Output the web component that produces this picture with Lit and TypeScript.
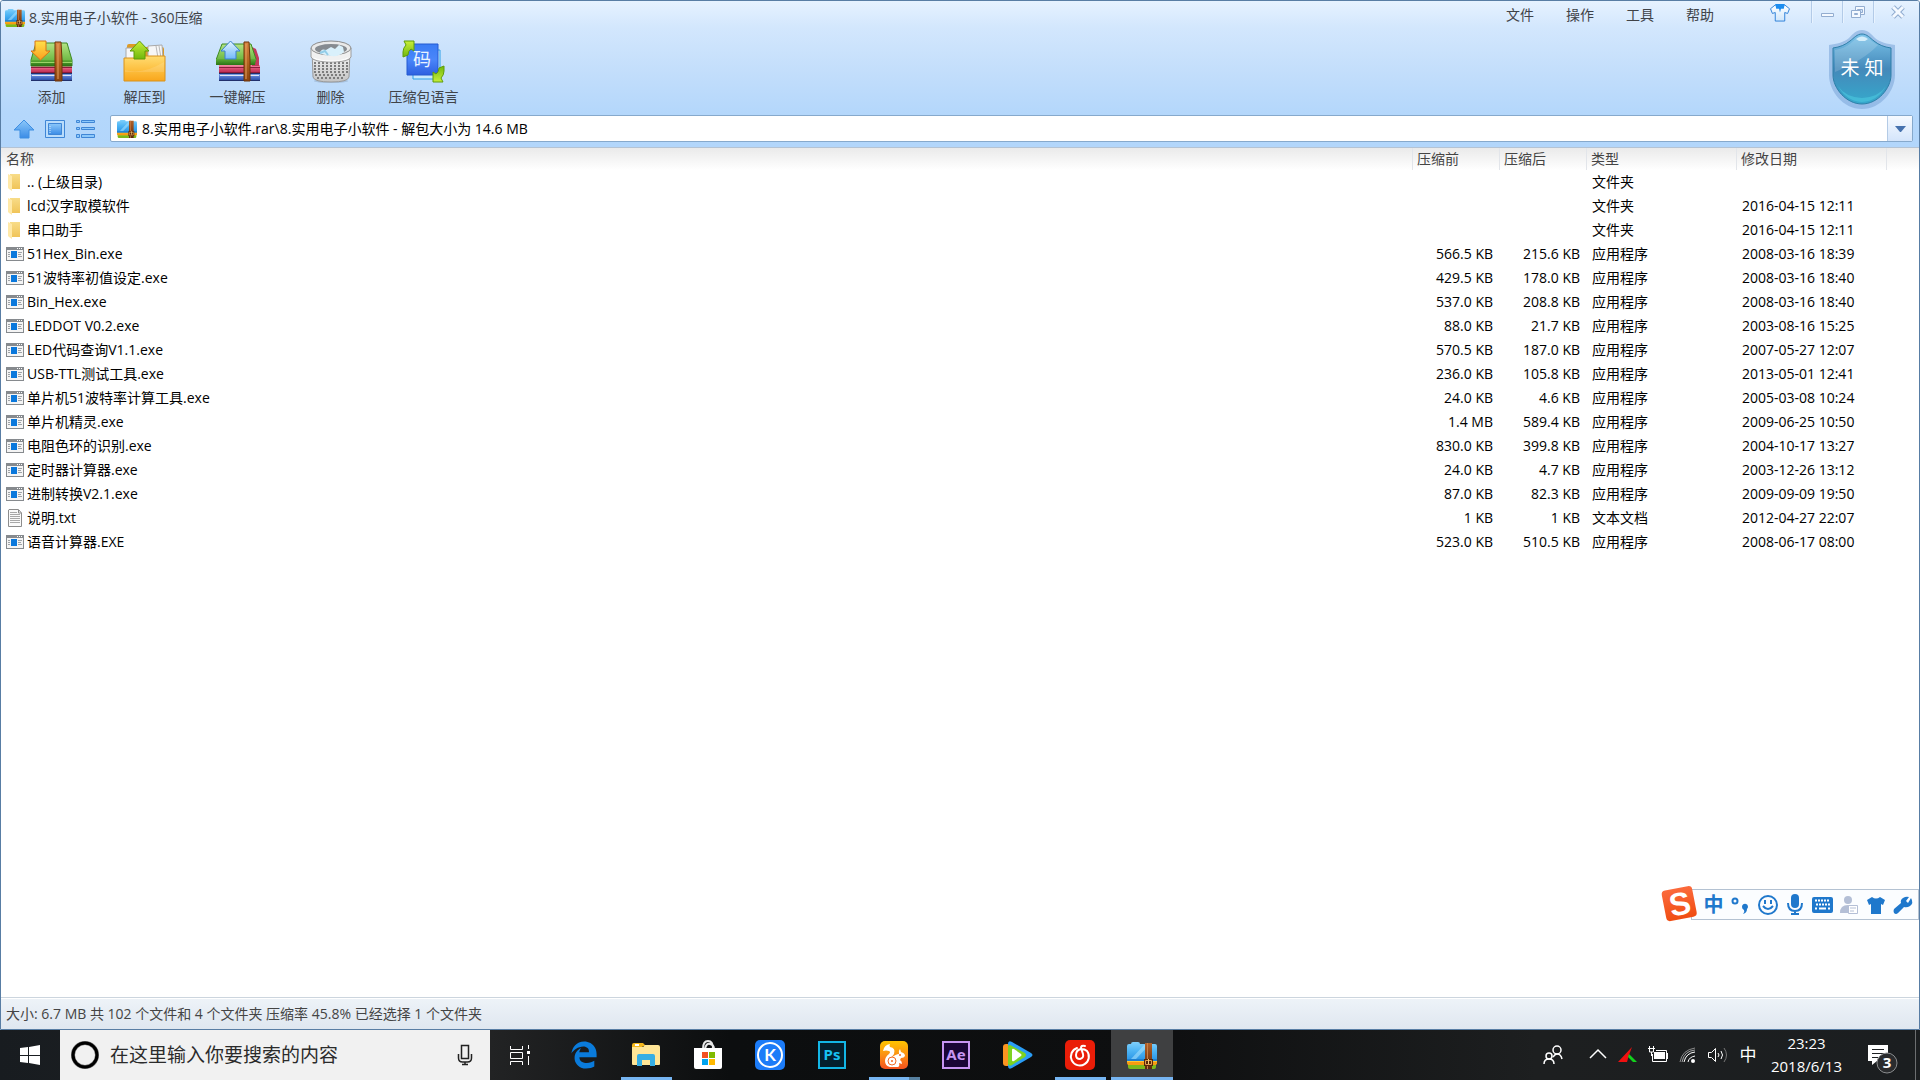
import { LitElement, html, css, svg, nothing } from "lit";
import { customElement } from "lit/decorators.js";
import { classMap } from "lit/directives/class-map.js";

type Kind = "folder" | "exe" | "txt";
interface Entry {
  name: string;
  kind: Kind;
  before?: string;
  after?: string;
  date?: string;
}

const TYPE_LABEL: Record<Kind, string> = { folder: "文件夹", exe: "应用程序", txt: "文本文档" };

const ENTRIES: Entry[] = [
  { name: ".. (上级目录)", kind: "folder" },
  { name: "lcd汉字取模软件", kind: "folder", date: "2016-04-15 12:11" },
  { name: "串口助手", kind: "folder", date: "2016-04-15 12:11" },
  { name: "51Hex_Bin.exe", kind: "exe", before: "566.5 KB", after: "215.6 KB", date: "2008-03-16 18:39" },
  { name: "51波特率初值设定.exe", kind: "exe", before: "429.5 KB", after: "178.0 KB", date: "2008-03-16 18:40" },
  { name: "Bin_Hex.exe", kind: "exe", before: "537.0 KB", after: "208.8 KB", date: "2008-03-16 18:40" },
  { name: "LEDDOT V0.2.exe", kind: "exe", before: "88.0 KB", after: "21.7 KB", date: "2003-08-16 15:25" },
  { name: "LED代码查询V1.1.exe", kind: "exe", before: "570.5 KB", after: "187.0 KB", date: "2007-05-27 12:07" },
  { name: "USB-TTL测试工具.exe", kind: "exe", before: "236.0 KB", after: "105.8 KB", date: "2013-05-01 12:41" },
  { name: "单片机51波特率计算工具.exe", kind: "exe", before: "24.0 KB", after: "4.6 KB", date: "2005-03-08 10:24" },
  { name: "单片机精灵.exe", kind: "exe", before: "1.4 MB", after: "589.4 KB", date: "2009-06-25 10:50" },
  { name: "电阻色环的识别.exe", kind: "exe", before: "830.0 KB", after: "399.8 KB", date: "2004-10-17 13:27" },
  { name: "定时器计算器.exe", kind: "exe", before: "24.0 KB", after: "4.7 KB", date: "2003-12-26 13:12" },
  { name: "进制转换V2.1.exe", kind: "exe", before: "87.0 KB", after: "82.3 KB", date: "2009-09-09 19:50" },
  { name: "说明.txt", kind: "txt", before: "1 KB", after: "1 KB", date: "2012-04-27 22:07" },
  { name: "语音计算器.EXE", kind: "exe", before: "523.0 KB", after: "510.5 KB", date: "2008-06-17 08:00" },
];

const icon = (w: number, h: number, body: unknown, vb = `0 0 ${w} ${h}`) =>
  html`<svg width=${w} height=${h} viewBox=${vb} aria-hidden="true">${body}</svg>`;

const grad = (id: string, a: string, b: string, c?: string) => svg`
  <linearGradient id=${id} x1="0" y1="0" x2="0" y2="1">
    <stop offset="0" stop-color=${a}></stop>
    ${c ? svg`<stop offset="0.5" stop-color=${c}></stop>` : nothing}
    <stop offset="1" stop-color=${b}></stop>
  </linearGradient>`;

const sharedDefs = html`<svg class="defs" width="0" height="0" aria-hidden="true"><defs>
  ${grad("g-blue", "#7fd0fb", "#2a95e6", "#4db4f4")}
  ${grad("g-belt", "#b0622a", "#5c2a0c", "#8a4518")}
  ${grad("g-green", "#b4e386", "#57a834", "#86c858")}
  ${grad("g-greenside", "#5fae36", "#2b7316")}
  ${grad("g-pink", "#f490a8", "#b52a50", "#d8486c")}
  ${grad("g-navy", "#8fb0ee", "#23469c", "#4f74cc")}
  ${grad("g-strap", "#d98444", "#8a430f", "#b5651f")}
  ${grad("g-orange", "#ffe04a", "#fb9f1e")}
  ${grad("g-lime", "#c8ee3a", "#6fb80c")}
  ${grad("g-sky", "#e4f5ff", "#72b8fa")}
  ${grad("g-folder", "#ffdc72", "#f9a61c", "#fdc244")}
  ${grad("g-file", "#f8dc88", "#f0c458")}
  ${grad("g-basket", "#f8f8f8", "#c4c4c4")}
  ${grad("g-code", "#3a7cf4", "#2d60e0", "#4a86fa")}
  ${grad("g-nav", "#8cc8fa", "#3b8ce6")}
  ${grad("g-shield", "#7cc4ea", "#35a9cc", "#4489ba")}
  ${grad("g-sogou", "#fb6a3c", "#f04d12")}
  ${grad("g-uc", "#ffc400", "#f4511e", "#fb9014")}
  ${grad("g-shirt", "#ffffff", "#cfe6fb")}
</defs></svg>`;

const archive = (w: number, h: number) =>
  icon(w, h, svg`
    <path d="M1 21h28v4q0 2-2 2H3q-2 0-2-2z" fill="#7cb81c"></path>
    <path d="M1 22h28v1H1z" fill="#b2dc3c"></path>
    <path d="M0 18h30v4q-1 1-2 1H2q-2 0-2-2z" fill="#f79a12"></path>
    <path d="M0 18h30v2H0z" fill="#ffc531"></path>
    <path d="M0 4q0-2 2-2h2q0-2 2-2h5q2 0 2 2h15q2 0 2 2v14H0z" fill="url(#g-blue)"></path>
    <path d="M4 17 17 3h5L9 17z" fill="#a4dffd" opacity=".6"></path>
    <path d="M0 17h30v2H0z" fill="#1c7fd0"></path>
    <path d="M18 1h7v26h-7z" fill="url(#g-belt)"></path>
    <path d="M20 1h1v26h-1z" fill="#c88048"></path>
    <path d="M17 17h9v7h-9z" fill="#5a2809"></path>
    <path d="M18.500 18.500h6v4h-6z" fill="none" stroke="#e0a04c"></path>
    <path d="M21 17h1v5h-1z" fill="#f4cc7c"></path>`, "0 0 30 27");

const books = svg`
  <path d="M1 33h41v8H1z" fill="url(#g-navy)"></path>
  <path d="M1 33h41v1H1zM1 40h41v1H1z" fill="#21306c"></path>
  <path d="M2 35h39v1H2z" fill="#dfe6f6"></path>
  <path d="M1 26h41v7H1z" fill="url(#g-pink)"></path>
  <path d="M1 27h41v1H1zM1 32h41v1H1z" fill="#8c1c3c"></path>
  <path d="M6 3h31l5 17v6H1v-6z" fill="url(#g-green)" stroke="#3e8a22"></path>
  <path d="M1 20h41v6H1z" fill="url(#g-greenside)"></path>
  <path d="M1 22h41v1H1z" fill="#9bd468"></path>`;

const iconAdd = icon(44, 44, svg`
  ${books}
  <path d="M25 2h6l1 18v21h-7z" fill="url(#g-strap)" stroke="#6d340b"></path>
  <path d="M28 4v35" stroke="#e4a060"></path>
  <path d="M5 1h11v10h4L10.500 20 1 11h4z" fill="url(#g-orange)" stroke="#d87416"></path>`);

const iconExtractTo = icon(44, 44, svg`
  <path d="M4 40V6q0-2 2-2h7l2 3h24q2 0 2 2v31z" fill="#dd9a26"></path>
  <path d="M3 8h9v12H3zM25 6l14-1 1 14H25z" fill="#f7f7f7" stroke="#a9a9a9"></path>
  <path d="M33 6l2 12M36 6l2 12" stroke="#b8b8b8" fill="none"></path>
  <path d="M1 18h12l3-2h26v25H1z" fill="url(#g-folder)" stroke="#d8921c"></path>
  <path d="M2 30q18 5 39-8v10H2z" fill="#fff" opacity=".13"></path>
  <path d="M16.500 1 26 11h-4v8H11v-8H7z" fill="url(#g-lime)" stroke="#5f9c0a"></path>`);

const iconOneKey = icon(44, 44, svg`
  <path d="M3 33h41v8H3z" fill="url(#g-navy)"></path>
  <path d="M3 33h41v1H3zM3 40h41v1H3z" fill="#21306c"></path>
  <path d="M4 35h39v1H4z" fill="#dfe6f6"></path>
  <path d="M3 25h41v8H3z" fill="url(#g-pink)"></path>
  <path d="M36 7l4 2 3 9v8h-7z" fill="#c23a5c"></path>
  <path d="M3 27h41v1H3zM3 32h41v1H3z" fill="#8c1c3c"></path>
  <path d="M6 4h29l5 15-2 5H1l-1-4z" fill="url(#g-green)" stroke="#3e8a22"></path>
  <path d="M0 19h40l-1 6H0z" fill="url(#g-greenside)"></path>
  <path d="M28 2h5l1 18v21h-6z" fill="url(#g-strap)" stroke="#6d340b"></path>
  <path d="M30 4v35" stroke="#e4a060"></path>
  <path d="M14.500 1 24 11h-4v8H9v-8H5z" fill="url(#g-sky)" stroke="#3a7fd0"></path>`);

const iconDelete = icon(44, 44, svg`
  <ellipse cx="22" cy="41" rx="17" ry="2" fill="#8fa7c4" opacity=".5"></ellipse>
  <path d="M3 10h38l-1 27q-1 5-18 5T4 37z" fill="url(#g-basket)" stroke="#9a9a9a"></path>
  <path d="M5 23h34M5 26h34M5 29h34M5 32h34M6 35h32M8 38h28" stroke="#7c7c7c" stroke-width="2" stroke-dasharray="2 2"></path>
  <path d="M2 8v9q2 5 20 5t20-5V8z" fill="#f0f0f0" stroke="#9c9c9c"></path>
  <path d="M5 18q6 3 17 3t17-3" stroke="#fff" fill="none"></path>
  <ellipse cx="22" cy="8" rx="20" ry="7" fill="#e9e9e9" stroke="#8b8b8b"></ellipse>
  <ellipse cx="22" cy="9" rx="16" ry="5" fill="#868b90"></ellipse>
  <path d="M11 13q1-5 6-3l5-3 4 2 4-4 4 2 1 5q-5 5-13 4t-11-3z" fill="#d9f0fb"></path>
  <path d="M11 13l5-2 3 4" stroke="#93cde8" fill="none" stroke-width="2"></path>`);

const turnArrow = "M1 17v-5q0-4 3-7L2 1h10v10L9 9q-3 2-3 6z";
const iconLang = icon(44, 44, svg`
  <path d="M11 10h27v29H11z" fill="#c8e9fd" stroke="#2d9fe8"></path>
  <path d="M5 4h31v31H5z" fill="url(#g-code)" stroke="#245ad0"></path>
  <text class="glyph-code" x="20" y="26" text-anchor="middle">码</text>
  <path d=${turnArrow} fill="url(#g-lime)" stroke="#5f9c0a"></path>
  <path d=${turnArrow} transform="rotate(180 21.500 21.500)" fill="url(#g-lime)" stroke="#5f9c0a"></path>`);

const iconUp = icon(22, 20, svg`<path d="M11 1 21 11h-5v8H7v-8H1z" fill="url(#g-nav)" stroke="#3f8fe2"></path>`);
const iconView = icon(22, 20, svg`
  <path d="M1.500 1.500h19v17h-19z" fill="#b9dcfb" stroke="#3f86d6"></path>
  <path d="M4.500 4.500h13v11h-13z" fill="url(#g-nav)" stroke="#3f86d6"></path>
  <path d="M6 7v7" stroke="#d8ecfd" stroke-dasharray="1 1"></path>`);
const iconList = icon(22, 20, svg`
  <g fill="#8cc8fa" stroke="#3f86d6">
    <path d="M1.500 1.500h3v2h-3zM6.500 1.500h13v2h-13zM1.500 8.500h3v2h-3zM6.500 8.500h13v2h-13zM1.500 15.500h3v3h-3zM6.500 15.500h13v3h-13z"></path>
  </g>`);

const iconSkin = icon(22, 18, svg`
  <path d="M6 1 1 5l2 5 3-1v9h10V9l3 1 2-5-5-4q-5 5-10 0z" fill="url(#g-shirt)" stroke="#2a7fd8"></path>
  <path d="M6 0h10l-1 5h-3l-1 4-1-4H7z" fill="#1c8df0"></path>`, "0 0 22 19");

const iconMin = icon(16, 14, svg`<path d="M2.500 8.500h12v3h-12z" fill="#f4f9ff" stroke="#93add0"></path>`);
const iconRestore = icon(16, 14, svg`
  <path d="M5.500 1.500h9v8h-9z" fill="#f4f9ff" stroke="#93add0"></path><path d="M7.500 4.500h5v3h-5z" fill="#cfe3fb" stroke="#93add0"></path>
  <path d="M1.500 5.500h9v7h-9z" fill="#f4f9ff" stroke="#93add0"></path><path d="M4.500 8.500h3v1h-3z" fill="#b4ccea" stroke="#93add0"></path>`);
const iconClose = icon(16, 14, svg`
  <path d="m3 2 10 10M13 2 3 12" stroke="#8fabcf" stroke-width="5"></path>
  <path d="m3 2 10 10M13 2 3 12" stroke="#f4f9ff" stroke-width="3"></path>`);

const shield = html`<svg width="68" height="80" viewBox="0 0 68 80" role="img" aria-label="未知">
  <path d="M34 0c6 0 9 4 13 8 5 4 12 6 20 7v30c0 16-14 34-33 34S1 61 1 45V15c8-1 15-3 20-7 4-4 7-8 13-8z" fill="#7fa9da" opacity=".6"></path>
  <path d="M34 4c5 0 8 4 12 7 5 4 10 6 17 7v27c0 13-13 29-29 29S5 58 5 45V18c7-1 12-3 17-7 4-3 7-7 12-7z" fill="url(#g-shield)" stroke="#2e7fa8"></path>
  <path d="M34 6c5 0 7 3 11 6l5 3Q36 30 7 42V20c6-1 11-3 16-7 4-3 6-7 11-7z" fill="#fff" opacity=".16"></path>
  <path d="M10 56q8 15 24 16 16-1 24-16-7 11-24 12-17-1-24-12z" fill="#4fd0e4" opacity=".5"></path>
  <path d="M28 9q6-5 12 0l-3 2h-6z" fill="#e6f8ff" opacity=".8"></path>
  <text class="glyph-shield" x="34" y="45" text-anchor="middle">未 知</text>
</svg>`;

const FILE_ICON: Record<Kind, unknown> = {
  folder: icon(18, 18, svg`
    <path d="M4 1h10v15H4z" fill="url(#g-file)"></path>
    <path d="M2 1l4 2v15l-3-2-1-1z" fill="#ffe9a8"></path>`),
  exe: icon(18, 14, svg`
    <rect width="18" height="14" fill="#868a8e"></rect>
    <path d="M1 3h16v10H1z" fill="#f4f4f4"></path>
    <path d="M11 1h1v1h-1zM13 1h1v1h-1zM15 1h1v1h-1z" fill="#fff"></path>
    <path d="M5 4h6v7H5z" fill="#0a78dc"></path>
    <path d="M2 5.500h2M2 7.500h2M2 9.500h2M12 5.500h4M12 7.500h3M12 9.500h4" stroke="#9ea2a6"></path>`),
  txt: icon(18, 18, svg`
    <path d="M2.500 1v16.500h13V4l-3-3.500H3z" fill="#fafafa" stroke="#8c8c8c"></path><path d="M12.500 1v3h3" fill="none" stroke="#8c8c8c"></path>
    <path d="M4 3.500h7M4 5.500h10M4 7.500h10M4 9.500h10M4 11.500h10M4 13.500h10" stroke="#a8a8a8"></path>`),
};

const TOOLS = [
  { label: "添加", art: iconAdd },
  { label: "解压到", art: iconExtractTo },
  { label: "一键解压", art: iconOneKey },
  { label: "删除", art: iconDelete },
  { label: "压缩包语言", art: iconLang },
];

const imeIcon = (body: unknown) => icon(22, 22, body);
const IME_KEYS = [
  { label: "标点", art: imeIcon(svg`<circle cx="5" cy="7" r="2.500" fill="none" stroke="#1f78cc" stroke-width="2"></circle>
      <path d="M12 13a3 3 0 1 1 5 2q0 4-4 5 2-2 1-4-2-1-2-3z" fill="#1f78cc"></path>`) },
  { label: "表情", art: imeIcon(svg`<circle cx="11" cy="11" r="9" fill="none" stroke="#1f78cc" stroke-width="2"></circle>
      <path d="M8 6v4M14 6v4" stroke="#1f78cc" stroke-width="2"></path><path d="M6 12q5 6 10 0" fill="none" stroke="#1f78cc" stroke-width="2"></path>`) },
  { label: "语音", art: imeIcon(svg`<rect x="7" y="0" width="8" height="14" rx="4" fill="#1f78cc"></rect>
      <path d="M4 9q0 8 7 8t7-8M11 17v4M7 20h8" fill="none" stroke="#1f78cc" stroke-width="2"></path>`) },
  { label: "软键盘", art: imeIcon(svg`<rect x="2" y="4" width="19" height="14" rx="1" fill="#1f78cc" stroke="#1f78cc" stroke-width="2"></rect>
      <path d="M4 6.500h15M5 10.500h14" stroke="#fff" stroke-width="2" stroke-dasharray="2 1"></path><path d="M4 14.500h2M8 14.500h7M17 14.500h2" stroke="#fff" stroke-width="2"></path>`) },
  { label: "用户", art: imeIcon(svg`<circle cx="10" cy="6" r="4" fill="#b4bfd6"></circle><path d="M2 19q0-8 8-8t8 8z" fill="#b4bfd6"></path>
      <path d="M10.500 11.500h9v8h-9z" fill="#fff" stroke="#b4bfd6"></path><path d="M12 14h6M12 17h4" stroke="#b4bfd6"></path>`) },
  { label: "皮肤", art: imeIcon(svg`<path d="M7 3 2 6l2 5 2-1v10h10V10l2 1 2-5-5-3q-4 3-8 0z" fill="#1f78cc"></path>`) },
  { label: "工具箱", art: imeIcon(svg`<path d="M19 4q3 5-1 8-3 2-6 1l-6 6q-2 2-4 0-1-2 0-4l7-6q-1-3 2-5 3-2 6-1l-3 4 2 2z" fill="#1f78cc"></path>`) },
];

interface TaskApp { label: string; art: unknown; open?: boolean; active?: boolean; stacked?: boolean }
const APPS: TaskApp[] = [
  { label: "Microsoft Edge", art: icon(28, 28, svg`<path fill="#0a7bdb" d="M25.714 228.163c.111-.162.23-.323.342-.485-.021.162-.045.323-.065.485h-.277zm460.572 15.508c0-44.032-7.754-84.465-28.801-122.405C416.498 47.879 343.912 8.001 258.893 8.001 118.962 7.724 40.617 113.214 26.056 227.679c42.429-61.312 117.073-121.376 220.375-124.966 0 0 109.666 0 99.419 104.957H169.997c6.369-37.386 18.554-58.986 34.339-78.926-75.049 34.893-121.85 96.096-120.742 188.315.83 71.448 50.124 144.836 120.743 171.976 83.357 31.847 192.776 7.2 240.132-21.324V363.307c-80.864 56.494-270.871 60.925-272.255-67.572h314.073v-52.064z"></path>`, "0 0 512 512") },
  { label: "文件资源管理器", open: true, art: icon(28, 26, svg`
      <path d="M0 3q0-2 2-2h9l3 3h-3L9 7H0z" fill="#f4b71c"></path><path d="M3 2h4v2H3z" fill="#fff"></path>
      <path d="M0 5h11l2-2h13q2 0 2 2v17q0 1-1 1H1q-1 0-1-1z" fill="#ffe596"></path>
      <path d="M5 24V14q0-2 2-2h14q2 0 2 2v10h-5v-6h-8v6z" fill="#36aee4"></path>`) },
  { label: "Microsoft Store", art: icon(30, 30, svg`
      <path d="M10 9q0-8 5-8t5 8M12 9q1-6 5-5 4 1 4 5" fill="none" stroke="#e8e8e8" stroke-width="2"></path>
      <path d="M1 8h28v19q0 2-2 2H3q-2 0-2-2z" fill="#fff"></path>
      <path d="M9 12h6v6H9z" fill="#f25022"></path><path d="M16 12h6v6h-6z" fill="#7fba00"></path>
      <path d="M9 19h6v6H9z" fill="#00a4ef"></path><path d="M16 19h6v6h-6z" fill="#ffb900"></path>`) },
  { label: "酷狗音乐", art: icon(30, 30, svg`
      <rect width="30" height="30" rx="5" fill="#1c7cf8"></rect><circle cx="15" cy="15" r="12" fill="none" stroke="#fff" stroke-width="2"></circle>
      <text class="glyph-k" x="15" y="21" text-anchor="middle">K</text>`) },
  { label: "Photoshop", art: icon(28, 28, svg`
      <path d="M1 1h26v26H1z" fill="#03202e" stroke="#13b6e6" stroke-width="2"></path>
      <text class="glyph-ps" x="14" y="19" text-anchor="middle">Ps</text>`) },
  { label: "UC浏览器", open: true, stacked: true, art: icon(28, 28, svg`
      <rect width="28" height="28" rx="5" fill="url(#g-uc)"></rect>
      <path d="M3 10q1-6 7-7-1 2 0 3 6 1 4 7l-3 4q5-4 8-4-1-3 1-5l1 3q4 1 4 4-1 2-4 2l-1 2q2 1 2 4l-3-1q1 3-1 4H10q-5-1-5-6 0-4 4-7 2-2 0-3Q6 9 3 10z" fill="#fff"></path>
      <circle cx="12" cy="20" r="4" fill="none" stroke="#f26a24"></circle><circle cx="12" cy="20" r="1" fill="#f26a24"></circle>
      <circle cx="20" cy="14" r="1" fill="#f26a24"></circle>`) },
  { label: "After Effects", art: icon(28, 28, svg`
      <path d="M1 1h26v26H1z" fill="#1a0636" stroke="#c795f2" stroke-width="2"></path>
      <text class="glyph-ae" x="14" y="19" text-anchor="middle">Ae</text>`) },
  { label: "腾讯视频", art: icon(30, 28, svg`
      <path d="M0 6q0-3 3-3h3v22H3q-3 0-3-3z" fill="#fb9420"></path>
      <path d="M5 3q0-4 4-2l19 11q3 2 0 4L9 27q-4 2-4-2z" fill="#2a9df6"></path>
      <path d="M5 5q1-2 4 0l13 7q2 2 0 4L9 24q-3 2-4-1z" fill="#7ed321"></path>
      <path d="M9 9q0-2 2-1l7 5q1 1 0 2l-7 5q-2 1-2-1z" fill="#fff"></path>`) },
  { label: "网易云音乐", open: true, art: icon(30, 30, svg`
      <rect width="30" height="30" rx="5" fill="#ea1d08"></rect>
      <path d="M12 8a9 9 0 1 0 10 3q-2-2-6-2-5 1-5 6 0 4 4 4 4-1 3-5L16 8q0-3 4-2" fill="none" stroke="#fff" stroke-width="2" stroke-linecap="round"></path>`) },
  { label: "360压缩", open: true, active: true, art: archive(30, 27) },
];

const trayIcon = (body: unknown, w = 22) => icon(w, 20, body);
const TRAY = [
  { label: "显示隐藏的图标", art: trayIcon(svg`<path d="m3 13 8-8 8 8" fill="none" stroke="#fff" stroke-width="1.500"></path>`) },
  { label: "Autodesk", art: trayIcon(svg`<path d="M1 17 15 2l-3 8-2 7z" fill="#f01010"></path><path d="m12 9 8 8h-4l-5-5z" fill="#12d21c"></path>`) },
  { label: "电池", art: trayIcon(svg`<path d="M7 7h11v7H7z" fill="#fff"></path><path d="M5.500 9v7.500h14V5.500H9M20.500 8v6" fill="none" stroke="#fff"></path>
      <path d="M1 3.500h7M2.500 4v3h4V4M2.500 1v2M6.500 1v2M4.500 7v4" fill="none" stroke="#fff"></path>`) },
  { label: "网络", art: trayIcon(svg`<g fill="none" stroke="#fff"><path d="M3 17Q5 5 18 3" stroke="#8c8c8c"></path><path d="M7 17q2-9 11-10M11 17q1-5 7-6"></path><path d="M5 17Q7 6 18 5" opacity=".6"></path></g><circle cx="16" cy="16" r="2" fill="#fff"></circle>`) },
  { label: "音量", art: trayIcon(svg`<path d="M1.500 7.500h3l4-4v13l-4-4h-3z" fill="none" stroke="#fff"></path><path d="M11 8q2 2 0 4M14 6q3 4 0 8" fill="none" stroke="#fff"></path><path d="M17 3q5 7 0 14" fill="none" stroke="#777"></path>`) },
];

@customElement("app-root")
export class AppRoot extends LitElement {
  static styles = css`
    :host {
      display: flex;
      flex-direction: column;
      min-height: 100vh;
      position: relative;
      font: 14px/24px "Open Sans", "Noto Sans CJK SC", sans-serif;
      color: #000;
      background: #fff;
    }
    *, *::before, *::after { box-sizing: border-box; }
    svg { display: block; flex: none; }
    .defs { position: absolute; }
    button {
      font: inherit;
      color: inherit;
      background: none;
      border: 0;
      padding: 0;
      margin: 0;
      display: flex;
      align-items: center;
      justify-content: center;
    }
    input {
      font: inherit;
      color: inherit;
      background: none;
      border: 0;
      padding: 0;
      outline: 0;
      flex: 1;
      min-width: 0;
    }
    .glyph-code { font-size: 18px; fill: #eaf3ff; }
    .glyph-shield { font-size: 19px; fill: #fff; }
    .glyph-k { font: bold 17px "Lato", sans-serif; fill: #fff; }
    .glyph-ps { font: bold 15px "Noto Sans", sans-serif; fill: #18c0f0; }
    .glyph-ae { font: bold 15px "Noto Sans", sans-serif; fill: #c795f2; }
    .glyph-s { font: bold 32px "Liberation Sans", sans-serif; fill: #fff; }

    .window {
      flex: 1;
      display: flex;
      flex-direction: column;
      border: 1px solid #587da4;
      border-radius: 3px 3px 0 0;
      overflow: hidden;
    }
    .chrome {
      background: linear-gradient(#e6f2ff, #d3e7fd 26px, #c3defb 70px, #b4d7fb 112px, #b2d6fb);
      border-bottom: 1px solid #b4c3d4;
      color: #404348;
    }
    .titlebar { display: flex; align-items: flex-start; height: 29px; }
    .title {
      flex: 1;
      display: flex;
      align-items: center;
      gap: 4px;
      margin: 0;
      padding: 5px 0 0 4px;
      font-size: 14px;
      font-weight: 400;
    }
    .menu { display: flex; padding-top: 2px; margin-right: 39px; }
    .menu button { width: 60px; height: 24px; }
    .skin { width: 22px; height: 24px; margin-right: 20px; }
    .wbtn {
      width: 31px;
      height: 22px;
      border-left: 1px solid #b3cbe8;
      box-shadow: inset 1px 0 #e8f3ff;
    }
    .wbtn.close { width: 46px; padding-left: 2px; }

    .toolbar { display: flex; align-items: flex-start; height: 85px; padding-left: 4px; }
    .tool {
      flex-direction: column;
      width: 93px;
      padding-top: 10px;
      line-height: 26px;
    }
    .shield { margin-left: auto; padding-right: 23px; }

    .pathbar { display: flex; align-items: center; gap: 9px; padding: 0 6px 5px 12px; }
    .pathbar .combo { margin-left: 4px; }
    .combo {
      flex: 1;
      display: flex;
      align-items: center;
      gap: 5px;
      height: 27px;
      padding-left: 6px;
      background: #fff;
      border: 1px solid #86a9cc;
      border-radius: 2px;
      color: #000;
    }
    .drop {
      width: 25px;
      height: 25px;
      border-left: 1px solid #b4cbe6;
      background: linear-gradient(#f6faff, #d4e5fb);
    }

    .files { width: 100%; table-layout: fixed; border-collapse: separate; border-spacing: 0; }
    .c-size { width: 87px; }
    .c-wide { width: 150px; }
    .c-end { width: 32px; }
    thead { background: linear-gradient(#eaeaea, #fff); }
    th {
      height: 22px;
      padding: 0 0 0 4px;
      line-height: 22px;
      font-weight: 400;
      text-align: left;
      color: #444;
      border-right: 1px solid #e2e5ea;
    }
    th:last-child { border-right: 0; }
    th:first-child, td:first-child { padding-left: 5px; }
    td { height: 24px; padding: 0 0 0 5px; white-space: nowrap; }
    td.num { text-align: right; padding: 0 7px 0 0; }
    .entry { display: flex; align-items: center; gap: 3px; }

    .status {
      margin-top: auto;
      border-top: 1px solid #ccd5de;
      box-shadow: inset 0 1px #fff;
      background: linear-gradient(#eef3f8, #dfe7f0);
      padding: 4px 5px 3px;
      color: #444;
    }

    .ime {
      position: absolute;
      right: 1px;
      bottom: 160px;
      display: flex;
      align-items: center;
      height: 31px;
      background: #fbfdff;
      border: 1px solid #b4c2d2;
      padding: 0 2px 0 10px;
      color: #1f78cc;
    }
    .ime button { width: 27px; height: 29px; }
    .ime .mode { font-size: 20px; font-weight: 700; }
    .ime .logo { width: 40px; height: 40px; margin-left: -42px; }

    .taskbar {
      display: flex;
      height: 50px;
      color: #fff;
      background: linear-gradient(90deg, #181c20, #232425 25%, #0c0e0f 38%, #0e0f10 60%, #1d1f20 80%, #1b1e20);
    }
    .start { width: 60px; }
    .search {
      display: flex;
      align-items: center;
      gap: 11px;
      width: 430px;
      padding: 0 17px 0 11px;
      background: #f1f1f1;
      color: #222;
      font-size: 19px;
    }
    .search input::placeholder { color: #2b2b2b; opacity: 1; }
    .taskview { width: 60px; margin-right: 3px; }
    .app { width: 62px; position: relative; }
    .app.open::after {
      content: "";
      position: absolute;
      left: 6px;
      right: 5px;
      bottom: 0;
      height: 3px;
      background: #76b5f2;
    }
    .app.stacked::after { background: linear-gradient(90deg, #76b5f2 40px, #56809f 40px); }
    .app.active { background-color: #3f4041; }
    .app.active::after { left: 0; right: 0; }
    .tray { display: flex; margin-left: auto; }
    .tray button { width: 30px; }
    .tray .people { width: 60px; }
    .tray .lang { font-size: 17px; }
    .clock {
      width: 87px;
      display: flex;
      flex-direction: column;
      justify-content: center;
      text-align: center;
      font-size: 15px;
      line-height: 23px;
    }
    .tray .notes { width: 65px; }
    .note-count { font-size: 15px; font-weight: 700; fill: #fff; }
    .tray .desktop { width: 5px; border-left: 1px solid #6c6e70; }
  `;

  private chrome() {
    return html`<header class="chrome">
      <div class="titlebar">
        <h1 class="title">${archive(20, 18)}<span>8.实用电子小软件 - 360压缩</span></h1>
        <nav class="menu">${["文件", "操作", "工具", "帮助"].map((m) => html`<button>${m}</button>`)}</nav>
        <button class="skin" aria-label="皮肤">${iconSkin}</button>
        <button class="wbtn" aria-label="最小化">${iconMin}</button>
        <button class="wbtn" aria-label="还原">${iconRestore}</button>
        <button class="wbtn close" aria-label="关闭">${iconClose}</button>
      </div>
      <div class="toolbar">
        ${TOOLS.map((t) => html`<button class="tool">${t.art}<span>${t.label}</span></button>`)}
        <div class="shield">${shield}</div>
      </div>
      <div class="pathbar">
        <button aria-label="向上">${iconUp}</button>
        <button aria-label="预览">${iconView}</button>
        <button aria-label="列表">${iconList}</button>
        <div class="combo">
          ${archive(20, 18)}
          <input type="text" aria-label="路径" .value=${"8.实用电子小软件.rar\\8.实用电子小软件 - 解包大小为 14.6 MB"} />
          <button class="drop" aria-label="展开路径">${icon(11, 6, svg`<path d="M0 0h11L6 6H5z" fill="#4672ae"></path>`)}</button>
        </div>
      </div>
    </header>`;
  }

  private files() {
    return html`<table class="files">
      <colgroup>
        <col /><col class="c-size" /><col class="c-size" /><col class="c-wide" /><col class="c-wide" /><col class="c-end" />
      </colgroup>
      <thead>
        <tr>${["名称", "压缩前", "压缩后", "类型", "修改日期", ""].map((h) => html`<th scope="col">${h}</th>`)}</tr>
      </thead>
      <tbody>
        ${ENTRIES.map((e) => html`<tr>
          <td><span class="entry">${FILE_ICON[e.kind]}<span>${e.name}</span></span></td>
          <td class="num">${e.before ?? nothing}</td>
          <td class="num">${e.after ?? nothing}</td>
          <td>${TYPE_LABEL[e.kind]}</td>
          <td>${e.date ?? nothing}</td>
          <td></td>
        </tr>`)}
      </tbody>
    </table>`;
  }

  private ime() {
    return html`<div class="ime" role="toolbar" aria-label="输入法">
      <button class="logo" aria-label="搜狗输入法">${icon(40, 40, svg`
        <g transform="rotate(-11 20 20)"><rect x="4" y="3" width="31" height="31" rx="4" fill="url(#g-sogou)"></rect>
        <text class="glyph-s" x="20" y="30" text-anchor="middle">S</text></g>`)}</button>
      <button class="mode">中</button>
      ${IME_KEYS.map((k) => html`<button aria-label=${k.label}>${k.art}</button>`)}
    </div>`;
  }

  private taskbar() {
    return html`<footer class="taskbar">
      <button class="start" aria-label="开始">${icon(20, 20, svg`<path d="M0 3l8-1v8H0zM9 2l11-2v10H9zM0 11h8v7l-8-1zM9 11h11v9L9 18z" fill="#fff"></path>`)}</button>
      <label class="search">
        ${icon(28, 28, svg`<circle cx="14" cy="14" r="12" fill="none" stroke="#777" stroke-width="4"></circle><circle cx="14" cy="14" r="12" fill="none" stroke="#000" stroke-width="3"></circle>`)}
        <input type="text" aria-label="搜索" placeholder="在这里输入你要搜索的内容" />
        ${icon(16, 22, svg`<path d="M4.500 1.500h7v13h-7zM1.500 10v4q0 4 4 4h5q4 0 4-4v-4M8 18v3M5 20.500h6" fill="none" stroke="#222" stroke-width="1.500"></path>`)}
      </label>
      <button class="taskview" aria-label="任务视图">${icon(20, 20, svg`
        <path d="M.500 1v3.500h12V1M.500 7.500h12v6H.500zM.500 20v-3.500h12V20M18.500 0v4M18.500 11v9" fill="none" stroke="#fff"></path><path d="M17 6h3v3h-3z" fill="#fff"></path>`)}</button>
      ${APPS.map((a) => html`<button
        class=${classMap({ app: true, open: !!a.open, active: !!a.active, stacked: !!a.stacked })}
        aria-label=${a.label}>${a.art}</button>`)}
      <div class="tray">
        <button class="people" aria-label="人脉">${icon(20, 20, svg`<g fill="none" stroke="#fff" stroke-width="1.500">
          <circle cx="14" cy="5" r="4"></circle><circle cx="6" cy="11" r="3"></circle><path d="M1 19q0-5 5-5t5 5M10 12q2-3 4-3 4 0 5 5"></path></g>`)}</button>
        ${TRAY.map((t) => html`<button aria-label=${t.label}>${t.art}</button>`)}
        <button class="lang">中</button>
        <div class="clock"><time>23:23</time><time>2018/6/13</time></div>
        <button class="notes" aria-label="3 条新通知">${icon(32, 38, svg`
          <path d="M1 9h20v16H10l-5 4v-4H1z" fill="#fff"></path><path d="M5 13.500h12M5 17.500h12M5 21.500h6" stroke="#1d2022"></path>
          <circle cx="20" cy="27" r="10" fill="#2a2c2e" stroke="#8a8c8e"></circle>
          <text class="note-count" x="20" y="32" text-anchor="middle">3</text>`)}</button>
        <button class="desktop" aria-label="显示桌面"></button>
      </div>
    </footer>`;
  }

  render() {
    return html`${sharedDefs}
      <main class="window">
        ${this.chrome()} ${this.files()}
        <div class="status">大小: 6.7 MB 共 102 个文件和 4 个文件夹 压缩率 45.8% 已经选择 1 个文件夹</div>
      </main>
      ${this.ime()} ${this.taskbar()}`;
  }
}
